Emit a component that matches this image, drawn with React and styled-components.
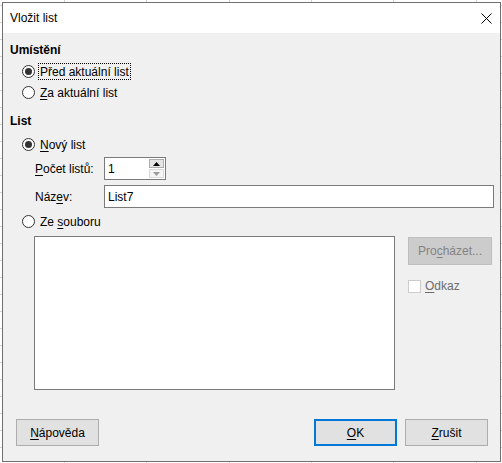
import React from "react";
import styled, { createGlobalStyle } from "styled-components";

const GlobalStyle = createGlobalStyle`
  html, body { margin: 0; padding: 0; }
  body {
    width: 502px;
    height: 463px;
    overflow: hidden;
    background-color: #fff;
    background-image:
      repeating-linear-gradient(to right, transparent 0, transparent 64px, #d2d2d2 64px, #d2d2d2 65px, transparent 65px, transparent 82.3px),
      repeating-linear-gradient(to bottom, transparent 0, transparent 5px, #d2d2d2 5px, #d2d2d2 6px, transparent 6px, transparent 17px);
    font-family: "Liberation Sans", Arial, sans-serif;
    font-size: 12px;
    color: #000;
  }
`;

const Dialog = styled.div`
  margin: 2px 0 0 2px;
  width: 499px;
  height: 460px;
  box-sizing: border-box;
  border: 1px solid #707070;
  display: flex;
  flex-direction: column;
  background: #f0f0f0;
`;

const TitleBar = styled.div`
  height: 30px;
  background: #fff;
  display: flex;
  align-items: center;
  justify-content: space-between;
  padding: 0 8px 0 7px;
`;

const Title = styled.div`
  font-size: 12px;
`;

const Body = styled.div`
  flex: 1;
  display: flex;
  flex-direction: column;
  padding: 0 6px 0 7px;
`;

const Heading = styled.div`
  font-weight: bold;
  height: 16px;
  line-height: 16px;
  margin-top: ${(p) => p.$top}px;
`;

const RadioRow = styled.label`
  display: flex;
  align-items: center;
  height: 21px;
  padding-left: 12px;
  margin-top: ${(p) => p.$top || 0}px;
`;

const RadioDot = styled.span`
  width: 13px;
  height: 13px;
  box-sizing: border-box;
  border: 1px solid #333;
  border-radius: 50%;
  background: #fff;
  display: flex;
  align-items: center;
  justify-content: center;
  margin-right: 3px;
  &::after {
    content: "";
    display: ${(p) => (p.$on ? "block" : "none")};
    width: 7px;
    height: 7px;
    border-radius: 50%;
    background: #333;
  }
`;

const RadioText = styled.span`
  padding: 1px 1px 0;
  line-height: 14px;
  border: 1px dotted ${(p) => (p.$focus ? "#000" : "transparent")};
`;

const Key = styled.span`
  text-decoration: underline;
  text-underline-offset: 2px;
`;

const FieldRow = styled.div`
  display: flex;
  align-items: center;
  height: 23px;
  padding-left: 25px;
  margin-top: ${(p) => p.$top}px;
`;

const FieldLabel = styled.span`
  width: 69px;
`;

const TextInput = styled.div`
  flex: ${(p) => (p.$grow ? 1 : "none")};
  width: ${(p) => (p.$grow ? "auto" : "62px")};
  height: 23px;
  box-sizing: border-box;
  border: 1px solid #7a7a7a;
  background: #fff;
  display: flex;
  align-items: center;
  padding-left: 3px;
`;

const InputValue = styled.span`
  flex: 1;
`;

const Spin = styled.div`
  display: flex;
  flex-direction: column;
  gap: 1px;
  margin-right: 1px;
`;

const SpinButton = styled.div`
  width: 15px;
  height: 9px;
  box-sizing: border-box;
  border: 1px solid ${(p) => (p.$disabled ? "#dadada" : "#adadad")};
  background: ${(p) => (p.$disabled ? "#f4f4f4" : "#e5e5e5")};
  display: flex;
  align-items: center;
  justify-content: center;
`;

const FileArea = styled.div`
  display: flex;
  margin-top: 4px;
  padding-left: 24px;
  gap: 13px;
`;

const ListBox = styled.div`
  width: 361px;
  height: 154px;
  box-sizing: border-box;
  border: 1px solid #7a7a7a;
  background: #fff;
`;

const SideColumn = styled.div`
  display: flex;
  flex-direction: column;
  padding-top: 1px;
`;

const Button = styled.div`
  width: ${(p) => p.$w || 83}px;
  height: ${(p) => p.$h || 27}px;
  box-sizing: border-box;
  border: ${(p) => (p.$default ? "2px solid #0078d7" : `1px solid ${p.$disabled ? "#bfbfbf" : "#adadad"}`)};
  background: ${(p) => (p.$disabled ? "#cccccc" : "#e1e1e1")};
  color: ${(p) => (p.$disabled ? "#838383" : "#000")};
  display: flex;
  align-items: center;
  justify-content: center;
`;

const CheckRow = styled.div`
  display: flex;
  align-items: center;
  margin-top: 14px;
  color: #6d6d6d;
`;

const CheckBox = styled.span`
  width: 13px;
  height: 13px;
  box-sizing: border-box;
  border: 1px solid #cccccc;
  background: #fff;
  margin-right: 4px;
`;

const Footer = styled.div`
  margin-top: auto;
  display: flex;
  align-items: center;
  padding: 0 6px 15px 6px;
`;

const FooterRight = styled.div`
  margin-left: auto;
  display: flex;
  gap: 8px;
`;

function Radio({ on, focus, children, top }) {
  return (
    <RadioRow $top={top}>
      <RadioDot $on={on} />
      <RadioText $focus={focus}>{children}</RadioText>
    </RadioRow>
  );
}

function Triangle({ up, color }) {
  return (
    <svg width="7" height="4" viewBox="0 0 7 4">
      <path d={up ? "M0 4 L3.5 0 L7 4 Z" : "M0 0 L3.5 4 L7 0 Z"} fill={color} />
    </svg>
  );
}

export default function App() {
  return (
    <>
      <GlobalStyle />
      <Dialog>
        <TitleBar>
          <Title>Vložit list</Title>
          <svg width="11" height="11" viewBox="0 0 11 11">
            <path d="M0.5 0.5 L10.5 10.5 M10.5 0.5 L0.5 10.5" stroke="#000" strokeWidth="1" />
          </svg>
        </TitleBar>
        <Body>
          <Heading $top={9}>Umístění</Heading>
          <Radio on focus top={3}>Před aktuální list</Radio>
          <Radio>
            <Key>Z</Key>a aktuální list
          </Radio>

          <Heading $top={10}>List</Heading>
          <Radio on top={5}>
            <Key>N</Key>ový list
          </Radio>
          <FieldRow $top={2}>
            <FieldLabel>
              <Key>P</Key>očet listů:
            </FieldLabel>
            <TextInput>
              <InputValue>1</InputValue>
              <Spin>
                <SpinButton>
                  <Triangle up color="#000" />
                </SpinButton>
                <SpinButton $disabled>
                  <Triangle color="#9a9a9a" />
                </SpinButton>
              </Spin>
            </TextInput>
          </FieldRow>
          <FieldRow $top={5}>
            <FieldLabel>
              Náz<Key>e</Key>v:
            </FieldLabel>
            <TextInput $grow>
              <InputValue>List7</InputValue>
            </TextInput>
          </FieldRow>
          <Radio top={3}>
            Ze <Key>s</Key>ouboru
          </Radio>
          <FileArea>
            <ListBox />
            <SideColumn>
              <Button $disabled $w={84} $h={28}>
                Pro<Key>c</Key>házet...
              </Button>
              <CheckRow>
                <CheckBox />
                <span>
                  <Key>O</Key>dkaz
                </span>
              </CheckRow>
            </SideColumn>
          </FileArea>

          <Footer>
            <Button>
              <Key>N</Key>ápověda
            </Button>
            <FooterRight>
              <Button $default>
                <Key>O</Key>K
              </Button>
              <Button>
                <Key>Z</Key>rušit
              </Button>
            </FooterRight>
          </Footer>
        </Body>
      </Dialog>
    </>
  );
}
